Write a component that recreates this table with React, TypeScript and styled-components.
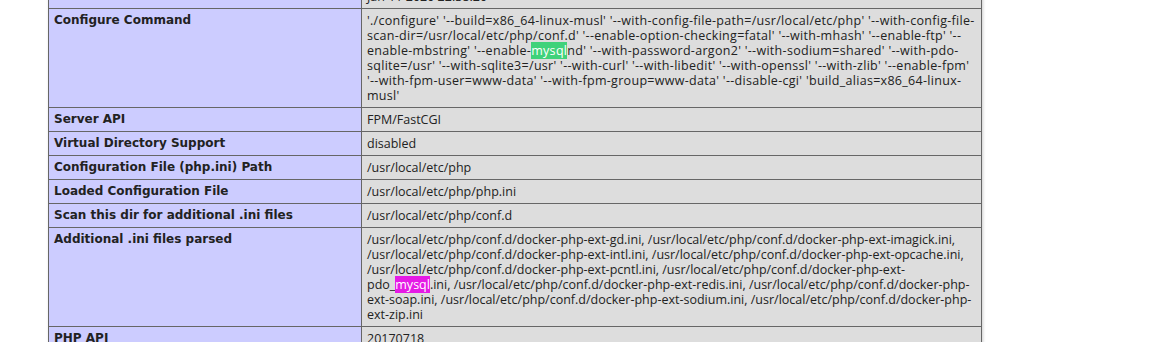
import React from "react";
import styled, { createGlobalStyle } from "styled-components";

const GlobalStyle = createGlobalStyle`
  html, body {
    margin: 0;
    padding: 0;
    background: #fff;
    color: #222;
    overflow: hidden;
  }
`;

const Page = styled.div`
  padding-left: 48px;
  margin-top: -16px;
`;

const InfoTable = styled.table`
  border-collapse: collapse;
  border: 0;
  width: 934px;
  box-shadow: 1px 2px 3px #ccc;
  text-align: left;
`;

const Cell = styled.td`
  border: 1px solid #666;
  font-size: 12px;
  line-height: 15px;
  vertical-align: top;
  padding: 4px 5px;
`;

const LabelCell = styled(Cell)`
  background-color: #ccf;
  width: 302px;
  font-weight: bold;
  font-family: "DejaVu Sans", sans-serif;
`;

const ValueCell = styled(Cell)<{ $spread?: boolean }>`
  background-color: #ddd;
  max-width: 300px;
  overflow-x: auto;
  word-wrap: break-word;
  font-family: "Open Sans", sans-serif;
  font-size: 12.5px;
  line-height: 15px;
  letter-spacing: ${(p) => (p.$spread ? "0.3px" : "normal")};
`;

const Mark = styled.span<{ $tone: "green" | "magenta" }>`
  background-color: ${(p) => (p.$tone === "green" ? "#3fd27a" : "#e51ae5")};
  color: #fff;
`;

type Row = { label: string; value: React.ReactNode; spread?: boolean };

const rows: Row[] = [
  { label: "Build Date", value: "Jan 11 2020 22:38:20" },
  {
    label: "Configure Command",
    spread: true,
    value: (
      <>
        './configure' '--build=x86_64-linux-musl' '--with-config-file-path=/usr/local/etc/php'
        '--with-config-file-scan-dir=/usr/local/etc/php/conf.d' '--enable-option-checking=fatal'
        '--with-mhash' '--enable-ftp' '--enable-mbstring' '--enable-
        <Mark $tone="green">mysql</Mark>nd' '--with-password-argon2' '--with-sodium=shared'
        '--with-pdo-sqlite=/usr' '--with-sqlite3=/usr' '--with-curl' '--with-libedit'
        '--with-openssl' '--with-zlib' '--enable-fpm' '--with-fpm-user=www-data'
        '--with-fpm-group=www-data' '--disable-cgi' 'build_alias=x86_64-linux-musl'
      </>
    ),
  },
  { label: "Server API", value: "FPM/FastCGI" },
  { label: "Virtual Directory Support", value: "disabled" },
  { label: "Configuration File (php.ini) Path", value: "/usr/local/etc/php" },
  { label: "Loaded Configuration File", value: "/usr/local/etc/php/php.ini" },
  { label: "Scan this dir for additional .ini files", value: "/usr/local/etc/php/conf.d" },
  {
    label: "Additional .ini files parsed",
    value: (
      <>
        /usr/local/etc/php/conf.d/docker-php-ext-gd.ini,
        /usr/local/etc/php/conf.d/docker-php-ext-imagick.ini,
        /usr/local/etc/php/conf.d/docker-php-ext-intl.ini,
        /usr/local/etc/php/conf.d/docker-php-ext-opcache.ini,
        /usr/local/etc/php/conf.d/docker-php-ext-pcntl.ini,
        /usr/local/etc/php/conf.d/docker-php-ext-pdo_<Mark $tone="magenta">mysql</Mark>.ini,
        /usr/local/etc/php/conf.d/docker-php-ext-redis.ini,
        /usr/local/etc/php/conf.d/docker-php-ext-soap.ini,
        /usr/local/etc/php/conf.d/docker-php-ext-sodium.ini,
        /usr/local/etc/php/conf.d/docker-php-ext-zip.ini
      </>
    ),
  },
  { label: "PHP API", value: "20170718" },
];

export default function App() {
  return (
    <>
      <GlobalStyle />
      <Page>
        <InfoTable>
          <tbody>
            {rows.map((r) => (
              <tr key={r.label}>
                <LabelCell>{r.label}</LabelCell>
                <ValueCell $spread={r.spread}>{r.value}</ValueCell>
              </tr>
            ))}
          </tbody>
        </InfoTable>
      </Page>
    </>
  );
}
